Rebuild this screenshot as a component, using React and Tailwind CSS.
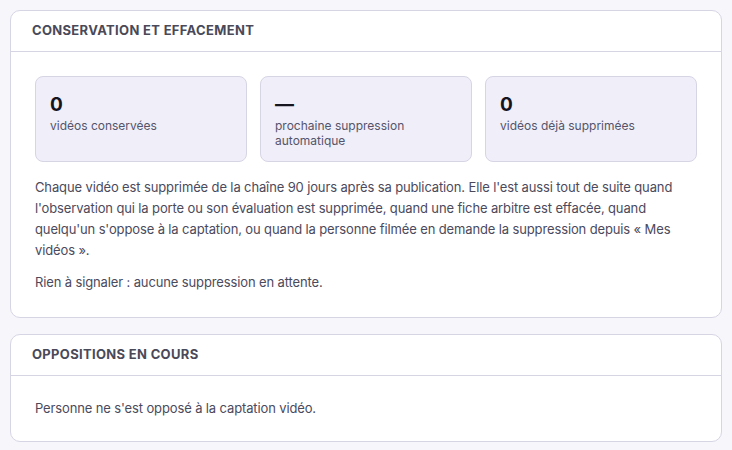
const stats = [
  { value: "0", label: "vidéos conservées" },
  { value: "—", label: "prochaine suppression automatique" },
  { value: "0", label: "vidéos déjà supprimées" },
];

const Card = ({ title, children }) => (
  <section className="bg-white border border-[#d6d5e4] rounded-[10px]">
    <div className="h-[41px] flex items-center px-[21px] border-b border-[#d6d5e4]">
      <h2 className="text-[13px] font-bold uppercase tracking-[0.025em] text-[#4a4958]">
        {title}
      </h2>
    </div>
    <div className="px-[24px]">{children}</div>
  </section>
);

export default function App() {
  return (
    <div
      className="min-h-screen bg-[#f6f6fb] p-[10px] flex flex-col gap-[16px]"
      style={{ fontFamily: "Inter, 'Noto Sans', sans-serif" }}
    >
      <Card title="Conservation et effacement">
        <div className="grid grid-cols-3 gap-[13px] pt-[24px]">
          {stats.map((s) => (
            <div
              key={s.label}
              className="h-[86px] rounded-[8px] border border-[#d6d5e4] bg-[#efeef9] px-[14px] pt-[15px]"
            >
              <div className="text-[19px] font-bold leading-[26px] text-[#16151f]">
                {s.value}
              </div>
              <div className="text-[12px] leading-[15px] text-[#55546a] pr-[40px]">
                {s.label}
              </div>
            </div>
          ))}
        </div>
        <p className="mt-[15px] text-[13px] leading-[21px] text-[#4b4a5c] tracking-[-0.01em]">
          Chaque vidéo est supprimée de la chaîne 90 jours après sa publication. Elle l'est aussi tout de suite quand l'observation qui la porte ou son évaluation est supprimée, quand une fiche arbitre est effacée, quand quelqu'un s'oppose à la captation, ou quand la personne filmée en demande la suppression depuis « Mes vidéos ».
        </p>
        <p className="mt-[11px] pb-[24px] text-[13px] leading-[21px] text-[#4b4a5c] tracking-[-0.01em]">
          Rien à signaler : aucune suppression en attente.
        </p>
      </Card>
      <Card title="Oppositions en cours">
        <p className="pt-[22px] pb-[22px] text-[13px] leading-[21px] text-[#4b4a5c] tracking-[-0.01em]">
          Personne ne s'est opposé à la captation vidéo.
        </p>
      </Card>
    </div>
  );
}
